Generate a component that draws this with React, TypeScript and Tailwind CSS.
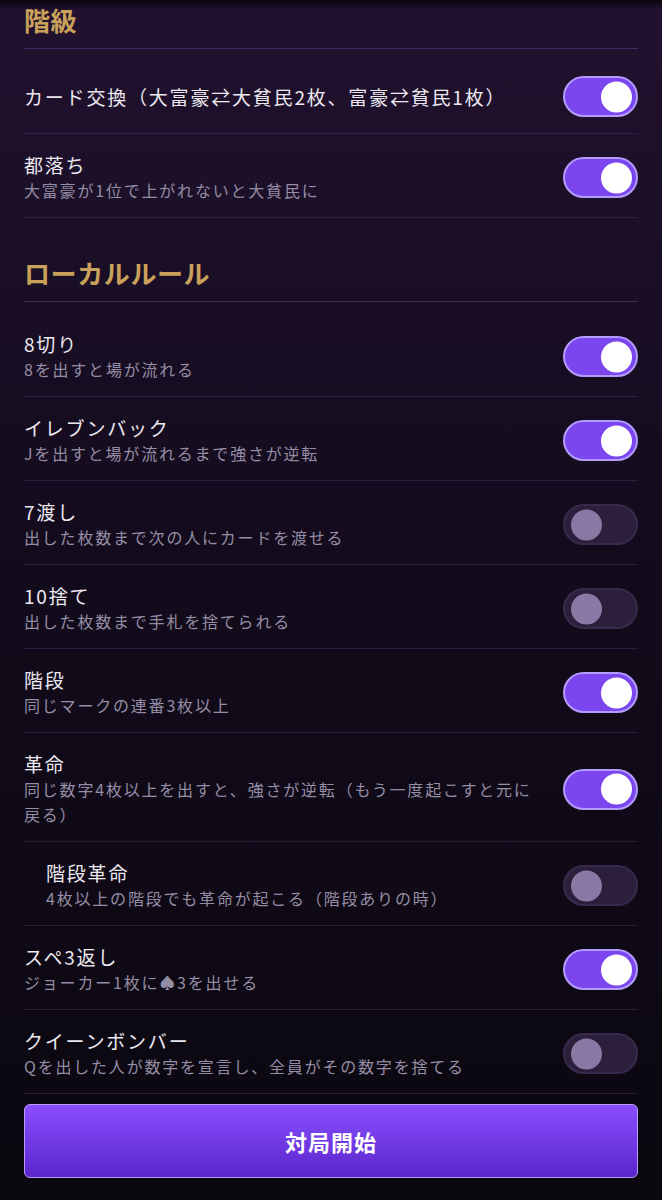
import React from "react";

type Rule = {
  title: string;
  desc?: string;
  on: boolean;
  indent?: boolean;
};

const classRules: Rule[] = [
  { title: "カード交換（大富豪⇄大貧民2枚、富豪⇄貧民1枚）", on: true },
  { title: "都落ち", desc: "大富豪が1位で上がれないと大貧民に", on: true },
];

const localRules: Rule[] = [
  { title: "8切り", desc: "8を出すと場が流れる", on: true },
  { title: "イレブンバック", desc: "Jを出すと場が流れるまで強さが逆転", on: true },
  { title: "7渡し", desc: "出した枚数まで次の人にカードを渡せる", on: false },
  { title: "10捨て", desc: "出した枚数まで手札を捨てられる", on: false },
  { title: "階段", desc: "同じマークの連番3枚以上", on: true },
  {
    title: "革命",
    desc: "同じ数字4枚以上を出すと、強さが逆転（もう一度起こすと元に戻る）",
    on: true,
  },
  {
    title: "階段革命",
    desc: "4枚以上の階段でも革命が起こる（階段ありの時）",
    on: false,
    indent: true,
  },
  { title: "スペ3返し", desc: "ジョーカー1枚に♠3を出せる", on: true },
  {
    title: "クイーンボンバー",
    desc: "Qを出した人が数字を宣言し、全員がその数字を捨てる",
    on: false,
  },
];

function Toggle({ on }: { on: boolean }) {
  return (
    <div
      className={`relative h-[41px] w-[75px] shrink-0 rounded-full border-2 ${
        on ? "border-[#b39bff] bg-[#7b46ee]" : "border-[#382a4c] bg-[#2b1f3c]"
      }`}
    >
      <div
        className={`absolute top-1/2 h-[31px] w-[31px] -translate-y-1/2 rounded-full ${
          on ? "right-[4px] bg-white" : "left-[6px] bg-[#8a79a5]"
        }`}
      />
    </div>
  );
}

function RuleRow({ rule }: { rule: Rule }) {
  return (
    <div
      className={`flex items-center gap-4 border-b border-[rgba(130,95,190,0.22)] ${
        rule.desc ? "pt-[18px] pb-[14px]" : "h-[74px] overflow-hidden"
      }`}
    >
      <div className={`min-w-0 flex-1 ${rule.indent ? "pl-[22px]" : ""}`}>
        <div className="text-[19px] leading-[26px] tracking-[1.8px] text-[#ebe8f0]">
          {rule.title}
        </div>
        {rule.desc && (
          <div className="text-[16px] leading-[25px] tracking-[1.8px] text-[#958da5]">
            {rule.desc}
          </div>
        )}
      </div>
      <Toggle on={rule.on} />
    </div>
  );
}

function SectionHeading({ label, first }: { label: string; first?: boolean }) {
  return (
    <div className={first ? "pt-[3px]" : "pt-[38px]"}>
      <h2 className="pb-[11px] text-[26px] font-bold leading-[34px] tracking-[0.6px] text-[#c9a15a]">
        {label}
      </h2>
      <div className="mb-[11px] h-px bg-[#3e2b60]" />
    </div>
  );
}

export default function App() {
  return (
    <div
      className="relative min-h-[1200px] bg-gradient-to-b from-[#21112f] via-[#120b1b] to-[#0b0810] px-6 pb-[21px]"
      style={{ fontFamily: '"Noto Sans CJK JP", "Noto Sans", sans-serif' }}
    >
      {/* header shadow */}
      <div className="pointer-events-none absolute inset-x-0 top-0 h-[10px] bg-gradient-to-b from-[#0a0710] to-transparent" />

      <SectionHeading label="階級" first />
      {classRules.map((r) => (
        <RuleRow key={r.title} rule={r} />
      ))}

      <SectionHeading label="ローカルルール" />
      {localRules.map((r) => (
        <RuleRow key={r.title} rule={r} />
      ))}

      <button className="mt-[10px] flex h-[74px] w-full items-center justify-center rounded-[6px] border-[1.5px] border-[#b99cff] bg-gradient-to-b from-[#8a4eff] to-[#5b25cc] text-[22px] font-bold tracking-[1px] text-white">
        対局開始
      </button>
    </div>
  );
}
